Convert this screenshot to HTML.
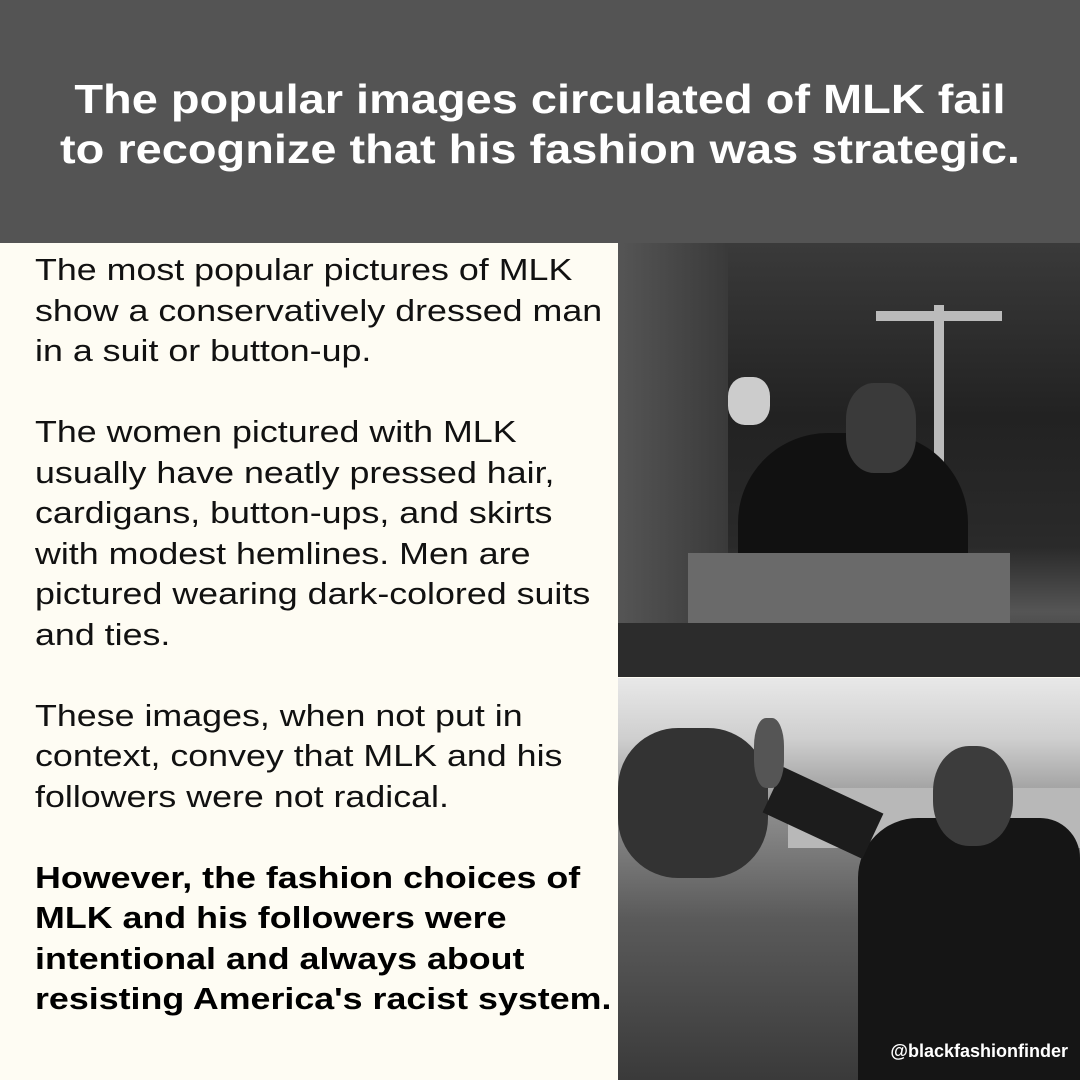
<!DOCTYPE html>
<html><head><style>
*{margin:0;padding:0;box-sizing:border-box}
body{width:1080px;height:1080px;background:#fefcf3;position:relative;overflow:hidden;font-family:"Liberation Sans",sans-serif}
.hd{position:absolute;left:0;top:0;width:1080px;height:243px;background:#545454}
.hd div{position:absolute;left:540px;top:74px;color:#fff;font-weight:bold;font-size:41px;text-align:center;line-height:50px;white-space:nowrap;transform:translateX(-50%) scaleX(1.145)}
.tx{position:absolute;left:35px;top:250px;font-size:31px;line-height:40.5px;color:#111;white-space:nowrap;transform:scaleX(1.155);transform-origin:0 0}
.tx p{margin-bottom:40.5px}
.tx b{color:#000}
.p1{position:absolute;left:618px;top:243px;width:462px;height:434px;background:linear-gradient(180deg,#3a3a3a,#222 40%,#2a2a2a 70%,#555 85%,#333);overflow:hidden}
.p2{position:absolute;left:618px;top:678px;width:462px;height:402px;background:linear-gradient(180deg,#e8e8e8 0%,#cfcfcf 15%,#8a8a8a 35%,#5a5a5a 60%,#3a3a3a 100%);overflow:hidden}
.tag{position:absolute;right:12px;bottom:18px;color:#fff;font-weight:bold;font-size:18px}
</style></head><body>
<div class="hd"><div>The popular images circulated of MLK fail<br>to recognize that his fashion was strategic.</div></div>
<div class="tx">
<p>The most popular pictures of MLK<br>show a conservatively dressed man<br>in a suit or button-up.</p>
<p>The women pictured with MLK<br>usually have neatly pressed hair,<br>cardigans, button-ups, and skirts<br>with modest hemlines. Men are<br>pictured wearing dark-colored suits<br>and ties.</p>
<p>These images, when not put in<br>context, convey that MLK and his<br>followers were not radical.</p>
<p><b>However, the fashion choices of<br>MLK and his followers were<br>intentional and always about<br>resisting America's racist system.</b></p>
</div>
<div class="p1">
<div style="position:absolute;left:0;top:0;width:110px;height:434px;background:linear-gradient(90deg,#555,#3a3a3a)"></div>
<div style="position:absolute;left:316px;top:62px;width:10px;height:160px;background:#bbb"></div>
<div style="position:absolute;left:258px;top:68px;width:126px;height:10px;background:#bbb"></div>
<div style="position:absolute;left:120px;top:190px;width:230px;height:200px;background:#111;border-radius:90px 90px 0 0"></div>
<div style="position:absolute;left:228px;top:140px;width:70px;height:90px;background:#3a3a3a;border-radius:40%"></div>
<div style="position:absolute;left:110px;top:134px;width:42px;height:48px;background:#ccc;border-radius:40%"></div>
<div style="position:absolute;left:70px;top:310px;width:322px;height:70px;background:#6a6a6a"></div>
<div style="position:absolute;left:0;top:380px;width:462px;height:54px;background:#2c2c2c"></div>
</div>
<div class="p2">
<div style="position:absolute;left:170px;top:110px;width:292px;height:60px;background:#b8b8b8"></div>
<div style="position:absolute;left:0;top:50px;width:150px;height:150px;background:#333;border-radius:40%"></div>
<div style="position:absolute;left:240px;top:140px;width:222px;height:262px;background:#151515;border-radius:60px 40px 0 0"></div>
<div style="position:absolute;left:315px;top:68px;width:80px;height:100px;background:#3c3c3c;border-radius:45%"></div>
<div style="position:absolute;left:150px;top:110px;width:110px;height:50px;background:#1c1c1c;transform:rotate(25deg)"></div>
<div style="position:absolute;left:136px;top:40px;width:30px;height:70px;background:#555;border-radius:40%"></div>
<div class="tag">@blackfashionfinder</div>
</div>
</body></html>
